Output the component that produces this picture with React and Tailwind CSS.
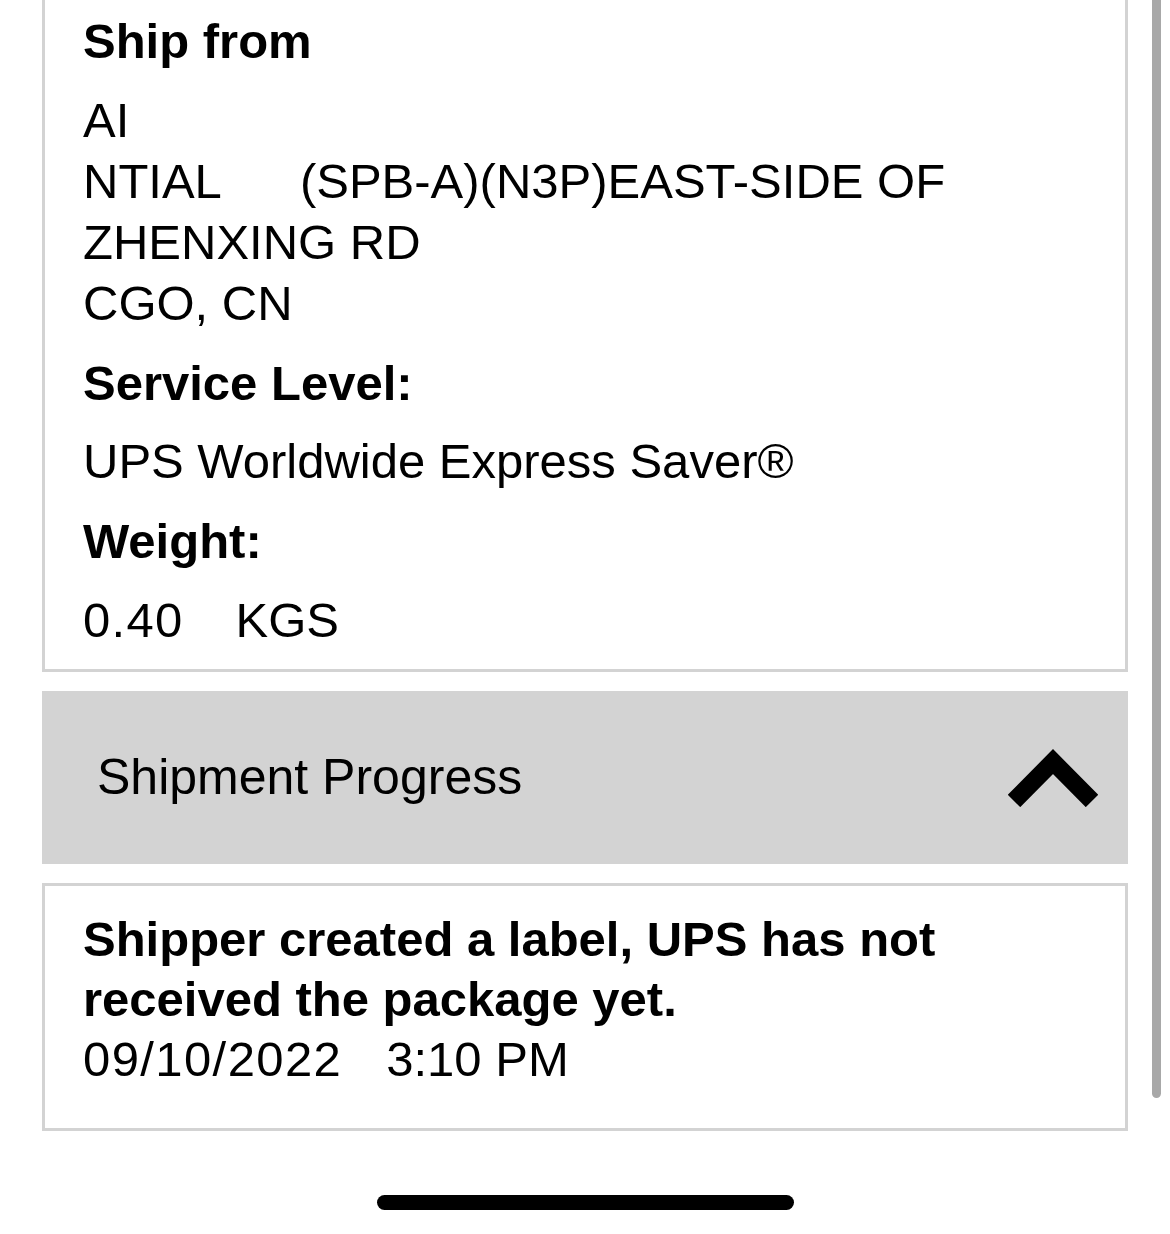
import React from 'react';

function ChevronUp() {
    return (
        <svg width="90" height="58" viewBox="0 0 90 58" className="block">
            <polyline
                points="6,52 45,12.5 84,52"
                fill="none"
                stroke="#000"
                strokeWidth="17.5"
                strokeLinecap="butt"
                strokeLinejoin="miter"
            />
        </svg>
    );
}

export default function App() {
    return (
        <div className="relative w-[1170px] h-[1234px] bg-white overflow-hidden font-['Liberation_Sans',Arial,sans-serif] text-black">
            <div className="px-[42px]">
                {/* Shipment details card (scrolled, top edge out of view) */}
                <div className="border-x-[3px] border-b-[3px] border-[#d3d3d3] pl-[38px] pt-[11px] pb-[18px]">
                    <div className="text-[49px] leading-[61px] font-bold">Ship from</div>
                    <div className="mt-[18px] text-[49px] leading-[61px]">
                        <div>AI</div>
                        <div className="flex">
                            <span>NTIAL</span>
                            <span className="ml-[78px]">(SPB-A)(N3P)EAST-SIDE OF</span>
                        </div>
                        <div>ZHENXING RD</div>
                        <div>CGO, CN</div>
                    </div>
                    <div className="mt-[19px] text-[49px] leading-[61px] font-bold">Service Level:</div>
                    <div className="mt-[17px] text-[49px] leading-[61px]">UPS Worldwide Express Saver®</div>
                    <div className="mt-[19px] text-[49px] leading-[61px] font-bold">Weight:</div>
                    <div className="mt-[18px] text-[49px] leading-[61px] flex">
                        <span className="tracking-[1.3px]">0.40</span>
                        <span className="ml-[52px]">KGS</span>
                    </div>
                </div>

                {/* Accordion header */}
                <div className="mt-[19px] h-[173px] bg-[#d3d3d3] flex items-center justify-between pl-[55px] pr-[30px]">
                    <span className="text-[50px] leading-[61px]">Shipment Progress</span>
                    <ChevronUp />
                </div>

                {/* Progress entry */}
                <div className="mt-[19px] border-[3px] border-[#d3d3d3] pl-[38px] pt-[23px] pb-[39px]">
                    <div className="text-[49px] leading-[60px] font-bold">
                        Shipper created a label, UPS has not
                        <br />
                        received the package yet.
                    </div>
                    <div className="text-[49px] leading-[60px] flex">
                        <span className="tracking-[1.4px]">09/10/2022</span>
                        <span className="ml-[44px]">3:10 PM</span>
                    </div>
                </div>
            </div>

            {/* home indicator */}
            <div className="mt-[64px] flex justify-center">
                <div className="w-[417px] h-[15px] rounded-full bg-black" />
            </div>

            {/* scrollbar overlay */}
            <div className="absolute top-0 right-[9px] w-[9px] h-[1098px] rounded-b-full bg-[#a8a8a8]" />
        </div>
    );
}
